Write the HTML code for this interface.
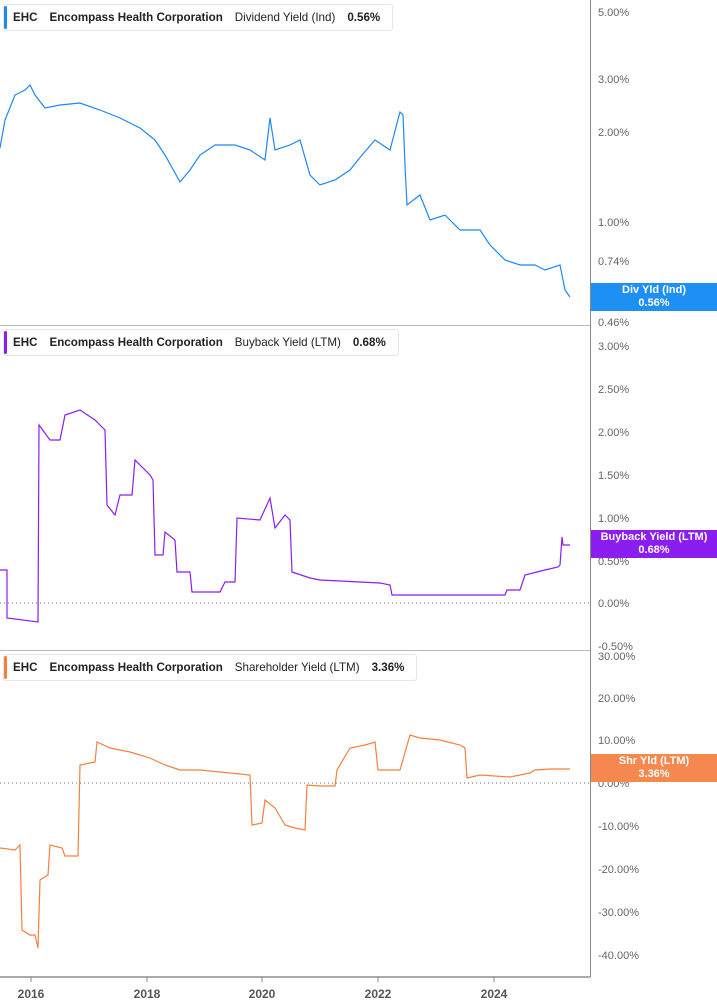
<!DOCTYPE html>
<html><head><meta charset="utf-8"><style>
body{margin:0;width:717px;height:1005px;background:#fff;overflow:hidden;font-family:"Liberation Sans",sans-serif}
svg{position:absolute;left:0;top:0}
.hd{position:absolute;left:3px;height:25px;background:#fff;border:1px solid #e6e6e6;border-radius:3px;font-size:11.6px;line-height:25px;color:#222;white-space:nowrap;padding-left:9px;padding-right:12px}
.hd:before{content:"";position:absolute;left:0;top:1px;bottom:1px;width:3px;border-radius:2px;background:var(--c)}
.hd b{margin-right:12px}
.hd span{margin-right:12px}
.lb{position:absolute;left:591px;width:126px;height:28px;color:#fff;font-weight:bold;font-size:11px;text-align:center;line-height:13px;padding-top:1px;box-sizing:border-box}
</style></head><body>
<svg width="717" height="1005" font-family="Liberation Sans, sans-serif" font-size="11" fill="#666">
<g stroke="#bbb" stroke-width="1"><line x1="0" y1="325.5" x2="590" y2="325.5"/><line x1="0" y1="650.5" x2="590" y2="650.5"/></g>
<line x1="0" y1="977" x2="590" y2="977" stroke="#aaa" stroke-width="2"/>
<line x1="590.5" y1="0" x2="590.5" y2="977" stroke="#888"/>
<g stroke="#666" stroke-dasharray="1,3"><line x1="0" y1="603" x2="590" y2="603"/><line x1="0" y1="783" x2="590" y2="783"/></g>
<g stroke="#888"><line x1="31" y1="977" x2="31" y2="982"/><line x1="147" y1="977" x2="147" y2="982"/><line x1="262" y1="977" x2="262" y2="982"/><line x1="378" y1="977" x2="378" y2="982"/><line x1="494" y1="977" x2="494" y2="982"/></g>
<g font-weight="bold" font-size="12" fill="#555" text-anchor="middle"><text x="31" y="998">2016</text><text x="147" y="998">2018</text><text x="262" y="998">2020</text><text x="378" y="998">2022</text><text x="494" y="998">2024</text></g>
<g><text x="598" y="16">5.00%</text><text x="598" y="83">3.00%</text><text x="598" y="136">2.00%</text><text x="598" y="226">1.00%</text><text x="598" y="265">0.74%</text><text x="598" y="326">0.46%</text>
<text x="598" y="350">3.00%</text><text x="598" y="393">2.50%</text><text x="598" y="436">2.00%</text><text x="598" y="479">1.50%</text><text x="598" y="522">1.00%</text><text x="598" y="565">0.50%</text><text x="598" y="607">0.00%</text><text x="598" y="650">-0.50%</text>
<text x="598" y="660">30.00%</text><text x="598" y="702">20.00%</text><text x="598" y="744">10.00%</text><text x="598" y="787">0.00%</text><text x="598" y="830">-10.00%</text><text x="598" y="873">-20.00%</text><text x="598" y="916">-30.00%</text><text x="598" y="959">-40.00%</text></g>
<polyline fill="none" stroke="#1e88f0" stroke-width="1.2" points="0,148 5,120 15,95 25,90 30,85 35,95 45,108 60,105 80,103 100,110 120,118 140,128 155,140 165,155 180,182 190,170 200,155 215,145 235,145 250,150 265,160 270,118 275,150 290,145 300,140 310,175 320,185 335,180 350,170 362,155 375,140 390,150 400,112 403,115 405,165 407,205 420,195 430,220 445,215 460,230 480,230 490,245 505,260 520,265 535,265 545,270 560,265 565,290 570,297"/>
<polyline fill="none" stroke="#8a1ef0" stroke-width="1.2" points="0,570 7,570 7,618 38,622 39,425 50,440 60,440 65,415 80,410 95,420 100,425 105,430 107,505 115,515 120,495 132,495 135,460 150,475 153,480 155,555 163,555 165,532 175,540 177,572 190,572 192,592 220,592 225,582 235,582 237,518 260,520 270,498 275,528 285,515 290,520 292,572 310,578 320,580 380,583 390,585 392,595 470,595 505,595 507,590 520,590 525,575 545,570 558,567 560,565 562,537 563,545 570,545"/>
<polyline fill="none" stroke="#f5803e" stroke-width="1.2" points="0,848 15,850 20,845 22,930 30,935 35,935 38,948 40,880 48,875 50,845 62,848 65,856 78,856 80,765 95,762 97,742 110,748 130,752 150,758 165,765 180,770 200,770 250,775 252,825 262,823 265,800 275,808 285,825 295,828 305,830 307,785 320,786 335,786 337,770 350,748 365,745 375,742 378,770 400,770 410,735 420,738 440,740 460,745 465,748 467,778 480,775 510,777 530,773 535,770 550,769 570,769"/>
</svg>
<div class="hd" style="--c:#1e88f0;top:4px"><b>EHC</b><b>Encompass Health Corporation</b><span>Dividend Yield (Ind)</span><b style="margin:0">0.56%</b></div>
<div class="hd" style="--c:#8a1ef0;top:329px"><b>EHC</b><b>Encompass Health Corporation</b><span>Buyback Yield (LTM)</span><b style="margin:0">0.68%</b></div>
<div class="hd" style="--c:#f5803e;top:654px"><b>EHC</b><b>Encompass Health Corporation</b><span>Shareholder Yield (LTM)</span><b style="margin:0">3.36%</b></div>
<div class="lb" style="top:283px;background:#1e8ff5">Div Yld (Ind)<br>0.56%</div>
<div class="lb" style="top:530px;background:#8a1ef0">Buyback Yield (LTM)<br>0.68%</div>
<div class="lb" style="top:754px;background:#f5884e">Shr Yld (LTM)<br>3.36%</div>
</body></html>
